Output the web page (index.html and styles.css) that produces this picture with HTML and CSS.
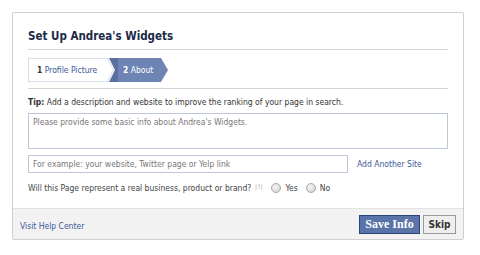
FILE: index.html
```html
<!DOCTYPE html>
<html>
<head>
<meta charset="utf-8">
<link rel="stylesheet" href="styles.css">
</head>
<body>
<div class="card">
  <div class="body">
    <h1 class="title">Set Up Andrea's Widgets</h1>
    <div class="steps">
      <div class="step step-done"><div class="step-inner"><b>1</b> Profile Picture</div></div>
      <div class="step step-current"><b>2</b> About</div>
    </div>
    <p class="tip"><b>Tip:</b> Add a description and website to improve the ranking of your page in search.</p>
    <div class="textarea">Please provide some basic info about Andrea's Widgets.</div>
    <div class="site-row">
      <div class="input">For example: your website, Twitter page or Yelp link</div>
      <a class="link add-site">Add Another Site</a>
    </div>
    <div class="question">
      <span>Will this Page represent a real business, product or brand?</span>
      <span class="help">[?]</span>
      <span class="radio"></span><span class="opt">Yes</span>
      <span class="radio"></span><span class="opt">No</span>
    </div>
  </div>
  <div class="footer">
    <a class="link">Visit Help Center</a>
    <div class="buttons">
      <button class="btn btn-primary">Save Info</button>
      <button class="btn btn-plain">Skip</button>
    </div>
  </div>
</div>
</body>
</html>
```
FILE: styles.css
```css
html, body {
  margin: 0;
  padding: 0;
  background: #fff;
}
body {
  font-family: "DejaVu Sans Condensed", "DejaVu Sans", sans-serif;
  font-size: 8.5px;
  color: #333;
}
.card {
  margin: 12px 0 0 12px;
  width: 452px;
  height: 228px;
  box-sizing: border-box;
  border: 1px solid #cfcfcf;
  border-radius: 2px;
  display: flex;
  flex-direction: column;
}
.body {
  flex: 1;
  padding: 16px 15px 0 15px;
}
.title {
  margin: 0;
  font-family: "DejaVu Sans Condensed", "DejaVu Sans", sans-serif;
  font-size: 11.5px;
  font-weight: bold;
  line-height: 14px;
  color: #1c2a47;
  padding-bottom: 6px;
  border-bottom: 1px solid #d4d4d4;
}
.steps {
  display: flex;
  padding: 8px 0 6px;
  border-bottom: 1px solid #d4d4d4;
}
.step {
  height: 24px;
  line-height: 24px;
}
.step-done {
  background: #d8dfea;
  padding: 1px 0 1px 1px;
  box-sizing: border-box;
  width: 86px;
  clip-path: polygon(0 0, calc(100% - 6px) 0, 100% 50%, calc(100% - 6px) 100%, 0 100%);
}
.step-inner {
  background: #fff;
  height: 22px;
  line-height: 22px;
  padding-left: 8px;
  color: #3b5998;
  clip-path: polygon(0 0, calc(100% - 7px) 0, calc(100% - 1px) 50%, calc(100% - 7px) 100%, 0 100%);
}
.step-inner b { color: #333; }
.step-current {
  margin-left: -5px;
  width: 59px;
  box-sizing: border-box;
  padding-left: 14px;
  color: #fff;
  background: linear-gradient(to right, #5a6f9e 0 9px, #6d84b4 9px);
  clip-path: polygon(0 0, calc(100% - 7px) 0, 100% 50%, calc(100% - 7px) 100%, 0 100%, 6px 50%);
}
.tip {
  margin: 7px 0 0;
  line-height: 12px;
}
.textarea {
  margin-top: 5px;
  height: 36px;
  box-sizing: border-box;
  border: 1px solid #bdc7d8;
  padding: 3px 4px;
  color: #777;
  line-height: 11px;
}
.site-row {
  margin-top: 6px;
  display: flex;
  align-items: center;
  gap: 9px;
}
.input {
  width: 320px;
  height: 18px;
  box-sizing: border-box;
  border: 1px solid #bdc7d8;
  padding: 0 4px;
  line-height: 16px;
  color: #777;
}
.link {
  color: #3b5998;
  text-decoration: none;
}
.question {
  margin-top: 9px;
  line-height: 12px;
  display: flex;
  align-items: center;
  color: #444;
}
.help {
  font-size: 6px;
  color: #999;
  margin-left: 4px;
  align-self: flex-start;
  line-height: 10px;
}
.radio {
  width: 10px;
  height: 10px;
  box-sizing: border-box;
  border-radius: 50%;
  border: 1px solid #a8a8a8;
  background: radial-gradient(circle at 40% 35%, #f4f4f4, #cfcfcf);
  margin-left: 9px;
  margin-right: 4px;
}
.opt + .radio { margin-left: 8px; }
.footer {
  height: 31px;
  box-sizing: border-box;
  border-top: 1px solid #e2e2e2;
  background: #f2f2f2;
  display: flex;
  align-items: center;
  justify-content: space-between;
  padding: 0 7px 0 7px;
}
.footer .link { padding-top: 3px; }
.buttons {
  display: flex;
  gap: 3px;
}
.btn {
  height: 19px;
  margin: 0;
  box-sizing: border-box;
  font-weight: bold;
  padding: 0;
  white-space: nowrap;
  cursor: pointer;
}
.btn-primary {
  width: 61px;
  font-family: "Liberation Serif", "DejaVu Serif", serif;
  font-size: 12px;
  color: #fff;
  background: #5b74a8;
  border: 1px solid #29447e;
}
.btn-plain {
  width: 33px;
  font-family: "DejaVu Sans Condensed", "DejaVu Sans", sans-serif;
  font-size: 10px;
  color: #333;
  background: #eee;
  border: 1px solid #999;
}
```
